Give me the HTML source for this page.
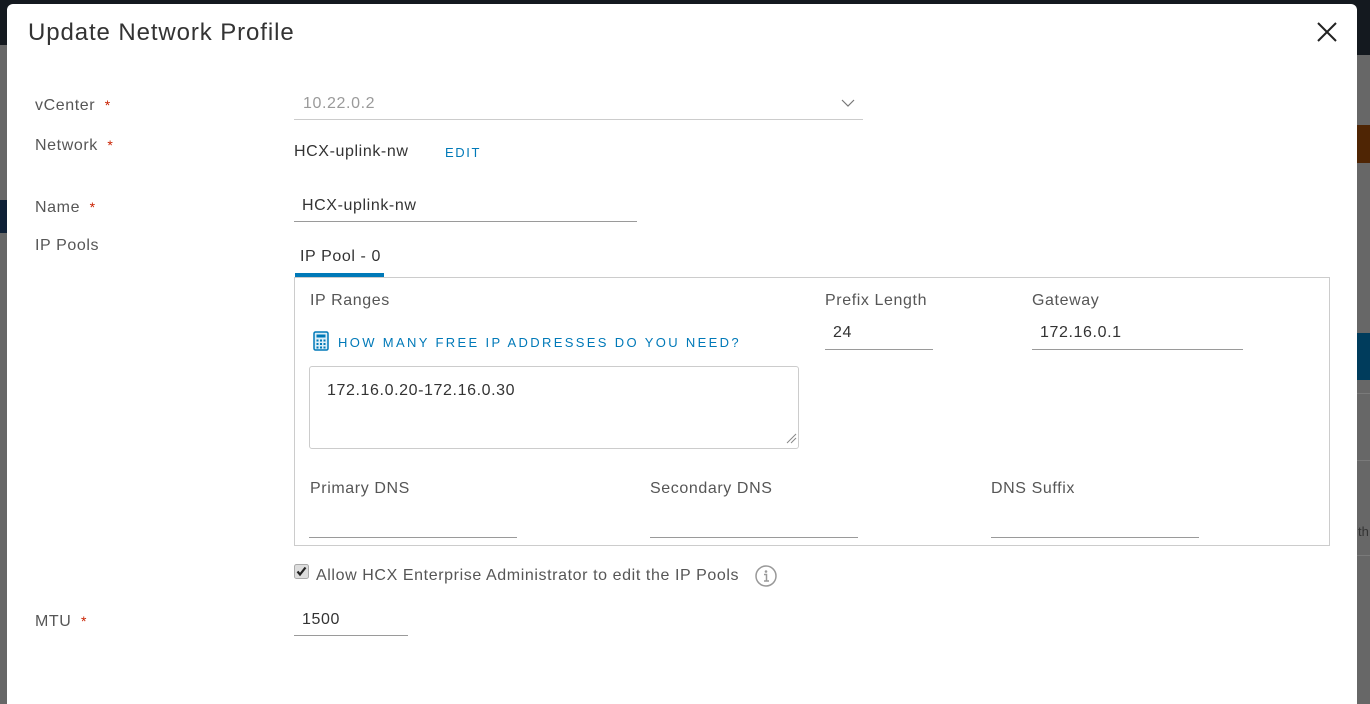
<!DOCTYPE html>
<html><head><meta charset="utf-8"><style>
*{margin:0;padding:0;box-sizing:border-box}
body{width:1370px;height:691px;overflow:hidden;position:relative;background:#676767;font-family:"Liberation Sans",sans-serif;color:#565656}
.a{position:absolute}
.t{position:absolute;white-space:nowrap;line-height:20px;font-size:16px;letter-spacing:0.6px}
.r{color:#c92100;font-size:14px}
.u{position:absolute;height:1px;background:#9a9a9a}
.d{color:#333}
</style></head><body>
<div class="a" style="left:0;top:0;width:1370px;height:45px;background:#14191f"></div>
<div class="a" style="left:1357px;top:0;width:13px;height:55px;background:#14191f"></div>
<div class="a" style="left:0;top:200px;width:7px;height:33px;background:#0e2036"></div>
<div class="a" style="left:1357px;top:125px;width:13px;height:38px;background:#4f2504"></div>
<div class="a" style="left:1357px;top:333px;width:13px;height:47px;background:#003c5c"></div>
<div class="a" style="left:1357px;top:393px;width:13px;height:1px;background:#7a7a7a"></div>
<div class="a" style="left:1357px;top:460px;width:13px;height:1px;background:#7a7a7a"></div>
<div class="t" style="left:1358px;top:522px;font-size:13px;color:#333;letter-spacing:0">th</div>
<div class="a" style="left:1357px;top:555px;width:13px;height:1px;background:#7a7a7a"></div>
<div class="a" style="left:7px;top:4px;width:1350px;height:700px;background:#fff;border-radius:6px 6px 0 0"></div>

<div class="t" style="left:28px;top:19px;font-size:24px;line-height:28px;color:#333;letter-spacing:0.9px">Update Network Profile</div>
<svg class="a" style="left:1315px;top:20px" width="24" height="24" viewBox="0 0 24 24"><path d="M3 3L21 21M21 3L3 21" stroke="#222" stroke-width="2"/></svg>

<div class="t" style="left:35px;top:95px">vCenter <span class="r">&nbsp;*</span></div>
<div class="t" style="left:35px;top:135px">Network <span class="r">&nbsp;*</span></div>
<div class="t" style="left:35px;top:197px">Name <span class="r">&nbsp;*</span></div>
<div class="t" style="left:35px;top:236px">IP Pools</div>
<div class="t" style="left:35px;top:611px">MTU <span class="r">&nbsp;*</span></div>

<div class="t" style="left:303px;top:94px;color:#9a9a9a">10.22.0.2</div>
<svg class="a" style="left:841px;top:98px" width="14" height="10" viewBox="0 0 14 10"><path d="M1 2L7 8L13 2" stroke="#777" stroke-width="1.2" fill="none"/></svg>
<div class="u" style="left:294px;top:119px;width:569px;background:#ccc"></div>

<div class="t d" style="left:294px;top:142px">HCX-uplink-nw</div>
<div class="t" style="left:445px;top:143px;color:#0079b8;font-size:13px;letter-spacing:1.6px">EDIT</div>

<div class="t d" style="left:302px;top:196px">HCX-uplink-nw</div>
<div class="u" style="left:294px;top:221px;width:343px"></div>

<div class="t d" style="left:300px;top:247px">IP Pool - 0</div>
<div class="a" style="left:295px;top:273px;width:89px;height:4px;background:#0079b8"></div>
<div class="a" style="left:294px;top:277px;width:1036px;height:269px;border:1px solid #ccc"></div>

<div class="t" style="left:310px;top:291px">IP Ranges</div>
<div class="t" style="left:825px;top:291px">Prefix Length</div>
<div class="t" style="left:1032px;top:291px">Gateway</div>

<svg class="a" style="left:313px;top:331px" width="16" height="20" viewBox="0 0 16 20"><rect x="1" y="1" width="14" height="18" rx="1.5" fill="#dbeef8" stroke="#0079b8" stroke-width="1.5"/><rect x="3.5" y="3.5" width="9" height="3" fill="#0079b8"/><g fill="#0079b8"><rect x="3.5" y="8.5" width="2" height="2"/><rect x="7" y="8.5" width="2" height="2"/><rect x="10.5" y="8.5" width="2" height="2"/><rect x="3.5" y="12" width="2" height="2"/><rect x="7" y="12" width="2" height="2"/><rect x="10.5" y="12" width="2" height="2"/><rect x="3.5" y="15.5" width="2" height="2"/><rect x="7" y="15.5" width="2" height="2"/><rect x="10.5" y="15.5" width="2" height="2"/></g></svg>
<div class="t" style="left:338px;top:333px;color:#0079b8;font-size:13px;letter-spacing:2.35px">HOW MANY FREE IP ADDRESSES DO YOU NEED?</div>

<div class="t d" style="left:833px;top:323px">24</div>
<div class="u" style="left:825px;top:349px;width:108px"></div>
<div class="t d" style="left:1040px;top:323px">172.16.0.1</div>
<div class="u" style="left:1032px;top:349px;width:211px"></div>

<div class="a" style="left:309px;top:366px;width:490px;height:83px;border:1px solid #ccc;border-radius:3px"></div>
<svg class="a" style="left:785px;top:432px" width="12" height="12" viewBox="0 0 12 12"><path d="M2 11L11 2M6 11L11 6" stroke="#888" stroke-width="1"/></svg>
<div class="t d" style="left:327px;top:381px">172.16.0.20-172.16.0.30</div>

<div class="t" style="left:310px;top:479px">Primary DNS</div>
<div class="t" style="left:650px;top:479px">Secondary DNS</div>
<div class="t" style="left:991px;top:479px">DNS Suffix</div>
<div class="u" style="left:309px;top:537px;width:208px"></div>
<div class="u" style="left:650px;top:537px;width:208px"></div>
<div class="u" style="left:991px;top:537px;width:208px"></div>

<svg class="a" style="left:294px;top:564px" width="15" height="15" viewBox="0 0 15 15"><rect x="0.5" y="0.5" width="14" height="14" rx="2" fill="#ddd" stroke="#aaa"/><path d="M3.5 7.5L6 10.5L11.5 3.5" stroke="#222" stroke-width="2.2" fill="none"/></svg>
<div class="t" style="left:316px;top:566px">Allow HCX Enterprise Administrator to edit the IP Pools</div>
<svg class="a" style="left:755px;top:565px" width="22" height="22" viewBox="0 0 22 22"><circle cx="11" cy="11" r="10" fill="none" stroke="#999" stroke-width="1.5"/><circle cx="11" cy="6.5" r="1.3" fill="#999"/><path d="M9 9.5H11.5V16M9 16H14" stroke="#999" stroke-width="1.5" fill="none"/></svg>

<div class="t d" style="left:302px;top:610px">1500</div>
<div class="u" style="left:294px;top:635px;width:114px"></div>
</body></html>
